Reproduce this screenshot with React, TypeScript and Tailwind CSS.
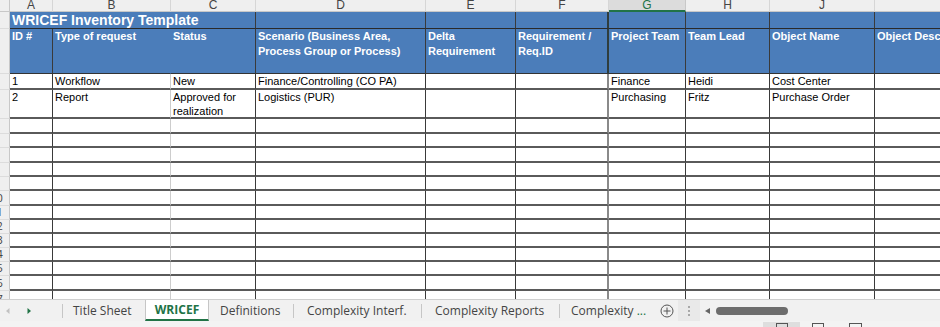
import React from 'react';

type Col = { letter: string; w: string; body: string; head: string };

const DARK = 'border-r border-r-[#3a3a3a]';

const COLS: Col[] = [
  { letter: 'A', w: 'w-[43px]', body: DARK, head: DARK },
  { letter: 'B', w: 'w-[118px]', body: 'border-r border-r-[#cdcdcd]', head: 'border-r border-r-[#4b7dba]' },
  { letter: 'C', w: 'w-[85px]', body: DARK, head: DARK },
  { letter: 'D', w: 'w-[170px]', body: DARK, head: DARK },
  { letter: 'E', w: 'w-[90px]', body: DARK, head: DARK },
  { letter: 'F', w: 'w-[93px]', body: 'border-r-2 border-r-[#8a8a8a]', head: 'border-r-2 border-r-[#2f3d3d]' },
  { letter: 'G', w: 'w-[77px]', body: DARK, head: DARK },
  { letter: 'H', w: 'w-[84px]', body: DARK, head: DARK },
  { letter: 'J', w: 'w-[105px]', body: DARK, head: DARK },
  { letter: '', w: 'w-[200px]', body: DARK, head: DARK },
];

const HEADERS = [
  'ID #',
  'Type of request',
  'Status',
  'Scenario (Business Area, Process Group or Process)',
  'Delta Requirement',
  'Requirement / Req.ID',
  'Project Team',
  'Team Lead',
  'Object Name',
  'Object Description',
];

// body rows: height class incl. 2px bottom border, and cell values
const BODY: { h: string; cells?: string[] }[] = [
  { h: 'h-[16px]', cells: ['1', 'Workflow', 'New', 'Finance/Controlling (CO PA)', '', '', 'Finance', 'Heidi', 'Cost Center', ''] },
  { h: 'h-[29px]', cells: ['2', 'Report', 'Approved for realization', 'Logistics (PUR)', '', '', 'Purchasing', 'Fritz', 'Purchase Order', ''] },
  { h: 'h-[15px]' },
  { h: 'h-[14px]' },
  { h: 'h-[15px]' },
  { h: 'h-[14px]' },
  { h: 'h-[14px]' },
  { h: 'h-[15px]' },
  { h: 'h-[14px]' },
  { h: 'h-[14px]' },
  { h: 'h-[14px]' },
  { h: 'h-[14px]' },
  { h: 'h-[14px]' },
  { h: 'h-[15px]' },
  { h: 'h-[17px]' },
];

function RowHead({ n, h }: { n: number; h: string }) {
  return (
    <div className={`${h} w-[26px] shrink-0 bg-[#efefef] border-r border-r-[#c8c8c8] border-b border-b-[#dcdcdc] flex items-center justify-center text-[11px] text-[#444] font-['Open_Sans',sans-serif]`}>
      {n}
    </div>
  );
}

function Sheet() {
  return (
    <div className="h-[299px] overflow-hidden">
      <div className="-ml-[16px] font-['Liberation_Sans',Arial,sans-serif]">
        {/* column letters */}
        <div className="flex h-[12px]">
          <div className="w-[26px] shrink-0 bg-[#efefef] border-r border-r-[#c8c8c8] border-b border-b-[#c8c8c8]" />
          {COLS.map((c) => (
            <div
              key={c.w + c.letter}
              className={`${c.w} shrink-0 flex justify-center text-[12px] leading-[10px] ${
                c.letter === 'G'
                  ? 'bg-[#dcdcdc] text-[#217346] border-b-2 border-b-[#217346] border-r border-r-[#c8c8c8]'
                  : 'bg-[#efefef] text-[#444] border-b border-b-[#c8c8c8] border-r border-r-[#d6d6d6]'
              }`}
            >
              {c.letter}
            </div>
          ))}
        </div>

        {/* title row */}
        <div className="flex h-[17px]">
          <RowHead n={1} h="h-[17px]" />
          <div className="w-[246px] shrink-0 bg-[#4b7dba] border-r border-r-[#3a3a3a] border-b border-b-[#2a2a2a] pl-[2px] text-[14px] leading-[16px] font-bold text-white whitespace-nowrap">
            WRICEF Inventory Template
          </div>
          {COLS.slice(3).map((c) => (
            <div key={c.w + c.letter} className={`${c.w} ${c.head} shrink-0 bg-[#4b7dba] border-b border-b-[#2a2a2a]`} />
          ))}
        </div>

        {/* header row */}
        <div className="flex h-[45px]">
          <RowHead n={2} h="h-[45px]" />
          {COLS.map((c, i) => (
            <div
              key={c.w + c.letter}
              className={`${c.w} ${c.head} shrink-0 overflow-hidden bg-[#4b7dba] border-b border-b-[#333] px-[2px] text-[11px] leading-[15px] font-bold text-white ${i === 9 ? 'whitespace-nowrap' : ''}`}
            >
              {HEADERS[i]}
            </div>
          ))}
        </div>

        {/* body rows */}
        {BODY.map((r, ri) => (
          <div key={ri} className="flex">
            <RowHead n={ri + 3} h={r.h} />
            {COLS.map((c, i) => (
              <div
                key={c.w + c.letter}
                className={`${r.h} ${c.w} ${c.body} shrink-0 overflow-hidden bg-white border-b-2 border-b-[#5a5a5a] px-[2px] text-[11px] leading-[14px] text-black`}
              >
                {r.cells ? r.cells[i] : ''}
              </div>
            ))}
          </div>
        ))}
      </div>
    </div>
  );
}

function Sep() {
  return <div className="w-px h-[14px] bg-[#c6c6c6] shrink-0" />;
}

function TabBar() {
  return (
    <div className="h-[22px] flex items-center bg-[#f1f1f1] border-t border-t-[#cfcfcf] font-['Open_Sans',sans-serif] text-[12px] text-[#444] whitespace-nowrap">
      <svg width="62" height="21" className="shrink-0">
        <polygon points="9.5,8 9.5,14 6,11" fill="#c2c2c2" />
        <polygon points="27.5,8 27.5,14 31,11" fill="#217346" />
      </svg>
      <Sep />
      <div className="w-[82px] shrink-0 pl-[10px]">Title Sheet</div>
      <div className="w-[64px] h-[21px] self-start shrink-0 bg-white border-x border-x-[#c6c6c6] border-b-2 border-b-[#217346] flex items-center justify-center font-bold text-[#217346]">
        WRICEF
      </div>
      <div className="w-[84px] shrink-0 pl-[11px]">Definitions</div>
      <Sep />
      <div className="w-[127px] shrink-0 pl-[13px]">Complexity Interf.</div>
      <Sep />
      <div className="w-[137px] shrink-0 pl-[13px]">Complexity Reports</div>
      <Sep />
      <div className="w-[94px] shrink-0 pl-[11px]">
        Complexity <span className="text-[#217346]">...</span>
      </div>
      <svg width="14" height="14" viewBox="0 0 14 14" className="shrink-0 ml-[6px]">
        <circle cx="7" cy="7" r="6" fill="none" stroke="#555" strokeWidth="1" />
        <path d="M7 3.5v7M3.5 7h7" stroke="#555" strokeWidth="1" />
      </svg>
      <div className="w-[22px] h-[21px] ml-[4px] shrink-0 bg-[#e9e9e9] flex flex-col items-center justify-center gap-[2px]">
        <div className="w-[2px] h-[2px] bg-[#a8a8a8]" />
        <div className="w-[2px] h-[2px] bg-[#a8a8a8]" />
        <div className="w-[2px] h-[2px] bg-[#a8a8a8]" />
      </div>
      <svg width="8" height="8" className="shrink-0 ml-[3px]">
        <polygon points="7,1 7,7 2,4" fill="#666" />
      </svg>
      <div className="w-[72px] h-[8px] ml-[5px] shrink-0 rounded-full bg-[#6d6d6d]" />
    </div>
  );
}

function StatusBar() {
  return (
    <div className="h-[6px] flex bg-[#f3f3f3] overflow-hidden">
      <div className="w-[37px] h-[6px] ml-[763px] mt-[1px] bg-[#dedede] flex justify-center pt-[1px]">
        <div className="w-[12px] h-[8px] border border-[#555]" />
      </div>
      <div className="w-[12px] h-[8px] ml-[12px] mt-[2px] border border-[#555]" />
      <div className="w-[13px] h-[8px] ml-[25px] mt-[2px] border border-[#555]" />
    </div>
  );
}

export default function App() {
  return (
    <div className="w-[940px] h-[327px] overflow-hidden bg-white flex flex-col">
      <Sheet />
      <TabBar />
      <StatusBar />
    </div>
  );
}
